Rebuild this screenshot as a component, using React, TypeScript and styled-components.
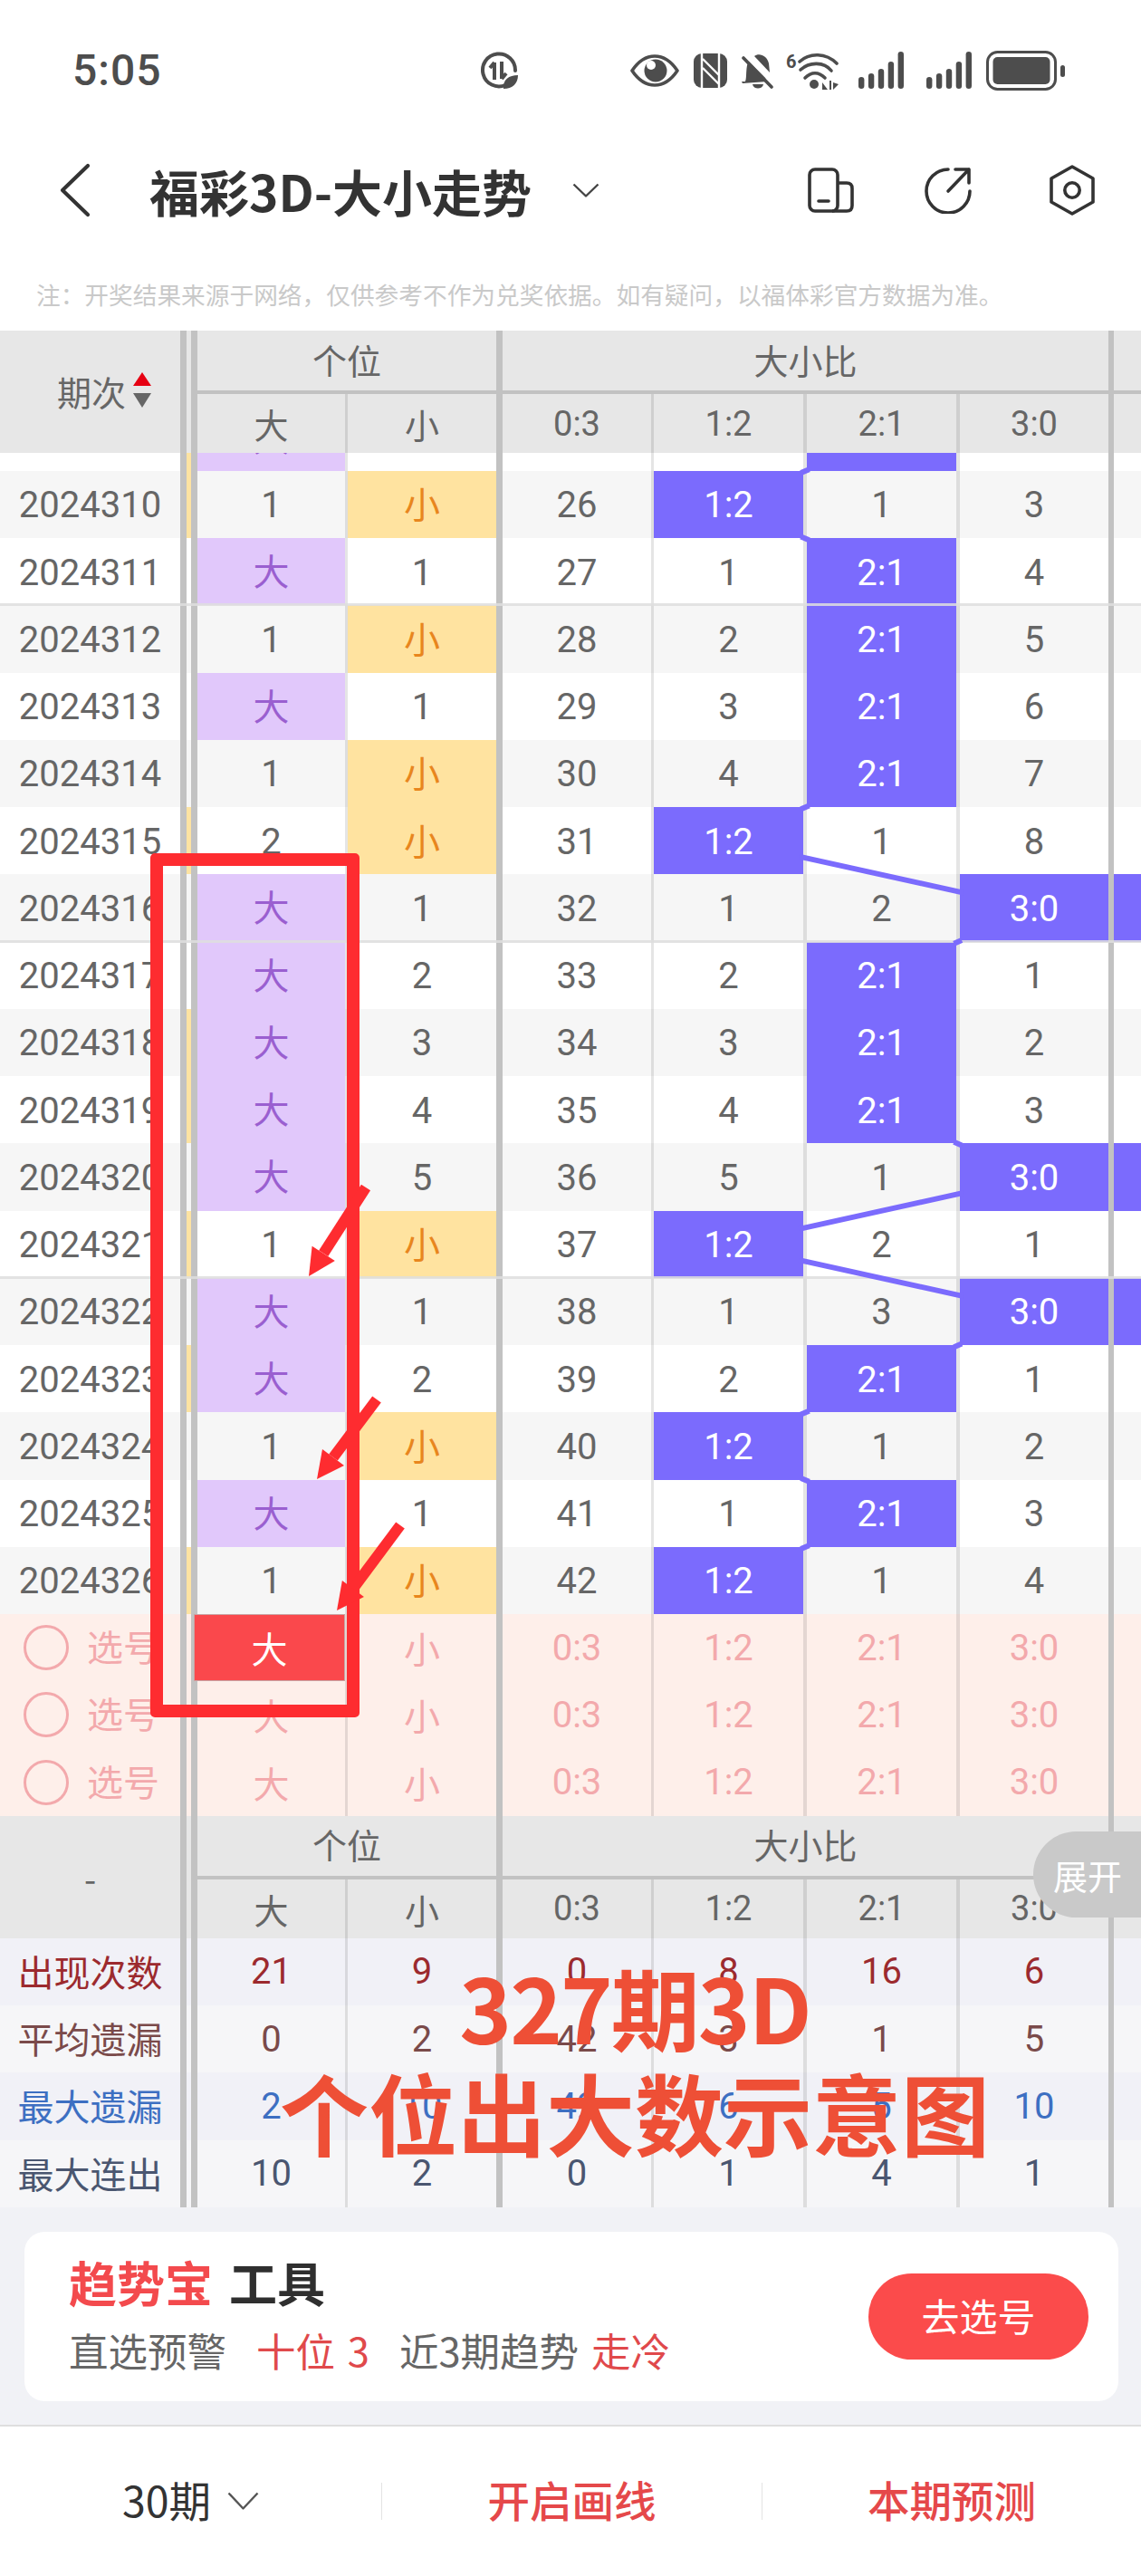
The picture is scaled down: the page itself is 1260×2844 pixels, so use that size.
import React from 'react';
import styled, { createGlobalStyle } from 'styled-components';

const GlobalStyle = createGlobalStyle`
  html, body { margin: 0; padding: 0; background: #fff; }
  * { box-sizing: border-box; }
`;

const FONT = `Roboto, "Noto Sans CJK SC", sans-serif`;
const CJK = `"Noto Sans CJK SC", sans-serif`;
const COLUMNS = '206px 12px 166px 171px 167px 169px 169px 170px 30px';
const EDGES = [3, 7, 3, 4, 4, 6];
const ROW_H = 74.25;

const Page = styled.div`
  position: relative;
  width: 1260px;
  height: 2844px;
  overflow: hidden;
  font-family: ${FONT};
  background: #fff;
  color: #666;
`;

/* ---------- status bar ---------- */
const StatusBar = styled.div`
  display: flex;
  align-items: center;
  height: 155px;
  padding-left: 80px;
  color: #4d4d4d;
`;
const Time = styled.div`
  width: 96px;
  font-size: 48px;
  font-weight: 500;
  letter-spacing: 1px;
  color: #4d4d4d;
`;
const StatusIcons = styled.div`
  display: flex;
  align-items: center;
  margin-left: 352px;
`;
const IconSlot = styled.span<{ $gap?: number }>`
  display: block;
  flex: none;
  margin-left: ${(p) => p.$gap ?? 0}px;
  svg { display: block; }
`;

/* ---------- nav ---------- */
const Nav = styled.div`
  display: flex;
  align-items: center;
  height: 110px;
  padding-left: 65px;
`;
const Title = styled.div`
  margin-left: 65px;
  width: 418px;
  font-family: ${CJK};
  font-size: 55px;
  font-weight: 700;
  white-space: nowrap;
  color: #333;
`;
const Note = styled.div`
  height: 100px;
  padding: 40px 0 0 40px;
  font-family: ${CJK};
  font-size: 26.7px;
  line-height: 40px;
  color: #c9c9c9;
  white-space: nowrap;
`;

/* ---------- table head ---------- */
const HeadGrid = styled.div`
  display: grid;
  grid-template-columns: ${COLUMNS};
  grid-template-rows: 70px 65px;
  background: #e7e7e7;
  font-family: ${CJK};
  font-size: 38px;
  color: #666;
`;
const HeadName = styled.div`
  grid-row: span 2;
  display: flex;
  align-items: center;
  justify-content: center;
  border-right: 7px solid #c2c2c2;
`;
const SortLabel = styled.div`
  display: flex;
  align-items: center;
  gap: 8px;
  padding: 0 0 3px 31px;
  svg { display: block; }
`;
const HeadGutter = styled.div`
  grid-row: span 2;
  border-right: 7px solid #c2c2c2;
`;
const HeadGroup = styled.div<{ $span: number; $edge: number }>`
  grid-column: span ${(p) => p.$span};
  display: flex;
  align-items: center;
  justify-content: center;
  padding-bottom: 4px;
  border-right: ${(p) => p.$edge}px solid #c2c2c2;
  border-bottom: 4px solid #c2c2c2;
`;
const HeadTail = styled.div`
  border-bottom: 4px solid #c2c2c2;
`;
const HeadCol = styled.div<{ $edge: number }>`
  display: flex;
  align-items: center;
  justify-content: center;
  font-family: ${FONT};
  font-size: 38px;
  border-right: ${(p) => p.$edge}px solid ${(p) => (p.$edge >= 6 ? '#c2c2c2' : '#cfcfcf')};
`;

/* ---------- table rows ---------- */
const Scroller = styled.div`
  height: 1282px;
  overflow: hidden;
`;
const ScrollInner = styled.div`
  position: relative;
  margin-top: -54.5px;
`;
const RowGrid = styled.div<{ $bg: string; $rule?: boolean }>`
  position: relative;
  display: grid;
  grid-template-columns: ${COLUMNS};
  height: ${ROW_H}px;
  background: ${(p) => p.$bg};
  ${(p) =>
    p.$rule &&
    `&::after {
      content: '';
      position: absolute;
      left: 0;
      right: 0;
      bottom: -1px;
      height: 3px;
      background: rgba(222, 222, 222, 0.85);
      z-index: 1;
    }`}
`;
const NameCell = styled.div<{ $color?: string }>`
  display: flex;
  align-items: center;
  justify-content: center;
  padding-top: ${(p) => (p.$color ? 0 : 2)}px;
  padding-bottom: ${(p) => (p.$color ? 2 : 0)}px;
  font-size: 40px;
  color: ${(p) => p.$color ?? '#666'};
  border-right: 7px solid #c2c2c2;
  white-space: nowrap;
  overflow: hidden;
`;
const PickName = styled(NameCell)`
  justify-content: flex-start;
  padding: 0 7px 0 26px;
  color: #f3a9ac;
  font-family: ${CJK};
`;
const PickCircle = styled.span`
  flex: none;
  width: 50px;
  height: 50px;
  margin-right: 20px;
  border: 3px solid #f3a9ac;
  border-radius: 50%;
`;
const PickLabel = styled.span`
  margin-top: -4px;
`;
const Gutter = styled.div<{ $strip?: boolean }>`
  border-right: 7px solid #c2c2c2;
  background: ${(p) => (p.$strip ? '#fde3a2' : 'transparent')};
`;
type Tone = 'plain' | 'purple' | 'yellow' | 'blue' | 'pick' | 'picked';
const toneBg: Record<Tone, string> = {
  plain: 'transparent',
  purple: '#e1c8fb',
  yellow: '#ffe3a0',
  blue: '#7b6bfd',
  pick: 'transparent',
  picked: '#fa484c',
};
const toneFg: Record<Tone, string> = {
  plain: '#666',
  purple: '#9a5fd0',
  yellow: '#e8861e',
  blue: '#fff',
  pick: '#f3a9ac',
  picked: '#fff',
};
const toneShift: Record<Tone, string> = {
  plain: 'padding-top: 2px;',
  purple: 'padding-bottom: 4px;',
  yellow: 'padding-bottom: 3px;',
  blue: 'padding-top: 2px;',
  pick: '',
  picked: '',
};
const Cell = styled.div<{ $tone: Tone; $edge: number; $color?: string }>`
  display: flex;
  align-items: center;
  justify-content: center;
  font-size: 40px;
  ${(p) => (p.$color ? '' : toneShift[p.$tone])}
  background: ${(p) => toneBg[p.$tone]};
  background-clip: padding-box;
  color: ${(p) => p.$color ?? toneFg[p.$tone]};
  border-right: ${(p) => p.$edge}px solid ${(p) => (p.$edge >= 6 ? '#c2c2c2' : 'rgba(0, 0, 0, 0.1)')};
  ${(p) => p.$tone === 'picked' && `margin-left: -4px; box-shadow: inset 0 0 0 1px #c9a3a3;`}
`;
const Tail = styled.div<{ $hit?: boolean }>`
  background: ${(p) => (p.$hit ? '#7b6bfd' : 'transparent')};
`;
const TrendLines = styled.svg`
  position: absolute;
  top: 0;
  left: 0;
  z-index: 2;
  pointer-events: none;
`;

/* ---------- tool card ---------- */
const ToolArea = styled.div`
  height: 242px;
  padding: 27px 25px 0 27px;
  background: #f1f2f6;
  border-bottom: 2px solid #dedede;
`;
const ToolCard = styled.div`
  display: flex;
  align-items: center;
  justify-content: space-between;
  height: 187px;
  padding: 0 33px 0 49px;
  border-radius: 22px;
  background: #fff;
`;
const ToolText = styled.div`
  display: flex;
  flex-direction: column;
  gap: 20px;
  padding-bottom: 6px;
  font-family: ${CJK};
`;
const ToolTitle = styled.div`
  display: flex;
  gap: 18px;
  height: 60px;
  align-items: center;
  font-size: 53px;
  font-weight: 700;
  color: #2f2f2f;
`;
const ToolBrand = styled.span`
  color: #f34a4d;
`;
const ToolSub = styled.div`
  display: flex;
  height: 50px;
  align-items: center;
  font-size: 43.5px;
  color: #666;
  white-space: nowrap;
`;
const SubPart = styled.span<{ $gap?: number; $red?: boolean }>`
  margin-left: ${(p) => p.$gap ?? 0}px;
  word-spacing: 4px;
  color: ${(p) => (p.$red ? '#e0494b' : '#666')};
`;
const GoButton = styled.div`
  display: flex;
  align-items: center;
  justify-content: center;
  width: 243px;
  height: 95px;
  padding-bottom: 3px;
  border-radius: 48px;
  background: #fb4b4b;
  font-family: ${CJK};
  font-size: 42px;
  color: #fff;
`;

/* ---------- bottom bar ---------- */
const BottomBar = styled.div`
  display: grid;
  grid-template-columns: 421px 1px 419px 1px 1fr;
  align-items: center;
  height: 165px;
  font-family: ${CJK};
  font-size: 46.5px;
`;
const BottomItem = styled.div<{ $red?: boolean }>`
  display: flex;
  align-items: center;
  justify-content: center;
  gap: 18px;
  padding-bottom: 5px;
  font-weight: ${(p) => (p.$red ? 500 : 400)};
  color: ${(p) => (p.$red ? '#e5484a' : '#333')};
  svg { display: block; margin-top: 5px; }
`;
const BottomDivider = styled.div`
  height: 41px;
  background: #e3e3e3;
`;

/* ---------- overlays ---------- */
const ExpandTab = styled.div`
  position: absolute;
  left: 1141px;
  top: 2022px;
  width: 119px;
  height: 95px;
  display: flex;
  align-items: center;
  padding-left: 22px;
  border-radius: 48px 0 0 48px;
  background: #c9c9c9;
  font-family: ${CJK};
  font-size: 38px;
  color: #fff;
  z-index: 3;
`;
const RedFrame = styled.div`
  position: absolute;
  left: 166px;
  top: 942px;
  width: 231px;
  height: 954px;
  border: 14px solid #fe2c30;
  border-radius: 5px;
  z-index: 4;
`;
const ArrowLayer = styled.svg`
  position: absolute;
  top: 0;
  left: 0;
  z-index: 5;
  pointer-events: none;
`;
const Caption = styled.div`
  position: absolute;
  left: 260px;
  top: 2156px;
  width: 882px;
  text-align: center;
  font-family: ${CJK};
  font-size: 98px;
  font-weight: 700;
  line-height: 116px;
  color: #ee4f36;
  z-index: 5;
`;
const CaptionTop = styled.div`
  letter-spacing: -2px;
`;

/* ---------- data ---------- */
type RowData = [string, string[]];
const ROWS: RowData[] = [
  ['2024309', ['大', '', '', '', '2:1', '']],
  ['2024310', ['1', '小', '26', '1:2', '1', '3']],
  ['2024311', ['大', '1', '27', '1', '2:1', '4']],
  ['2024312', ['1', '小', '28', '2', '2:1', '5']],
  ['2024313', ['大', '1', '29', '3', '2:1', '6']],
  ['2024314', ['1', '小', '30', '4', '2:1', '7']],
  ['2024315', ['2', '小', '31', '1:2', '1', '8']],
  ['2024316', ['大', '1', '32', '1', '2', '3:0']],
  ['2024317', ['大', '2', '33', '2', '2:1', '1']],
  ['2024318', ['大', '3', '34', '3', '2:1', '2']],
  ['2024319', ['大', '4', '35', '4', '2:1', '3']],
  ['2024320', ['大', '5', '36', '5', '1', '3:0']],
  ['2024321', ['1', '小', '37', '1:2', '2', '1']],
  ['2024322', ['大', '1', '38', '1', '3', '3:0']],
  ['2024323', ['大', '2', '39', '2', '2:1', '1']],
  ['2024324', ['1', '小', '40', '1:2', '1', '2']],
  ['2024325', ['大', '1', '41', '1', '2:1', '3']],
  ['2024326', ['1', '小', '42', '1:2', '1', '4']],
];
const STRIPS = new Set(['2024309', '2024310', '2024315', '2024318', '2024319', '2024321', '2024323', '2024326']);
const RULES = new Set(['2024311', '2024316', '2024321']);
const COL_LABELS = ['大', '小', '0:3', '1:2', '2:1', '3:0'];
const STATS: { label: string; color: string; bg: string; values: string[] }[] = [
  { label: '出现次数', color: '#9c2a2e', bg: '#f1f1f7', values: ['21', '9', '0', '8', '16', '6'] },
  { label: '平均遗漏', color: '#7a4a4a', bg: '#f6f6f8', values: ['0', '2', '42', '3', '1', '5'] },
  { label: '最大遗漏', color: '#3d6fc2', bg: '#f1f1f7', values: ['2', '10', '42', '6', '5', '10'] },
  { label: '最大连出', color: '#4a5670', bg: '#f6f6f8', values: ['10', '2', '0', '1', '4', '1'] },
];

const toneOf = (v: string): Tone => (v === '大' ? 'purple' : v === '小' ? 'yellow' : v.includes(':') ? 'blue' : 'plain');

const CENTER_X: Record<string, number> = { '1:2': 804.5, '2:1': 973.5, '3:0': 1142 };
const hits = ROWS.map(([, v], i) => {
  const label = v.slice(2).find((s) => s.includes(':')) as string;
  return { x: CENTER_X[label], y: i * ROW_H + 37 };
});
const segments = hits.slice(1).flatMap((b, i) => {
  const a = hits[i];
  const dx = b.x - a.x;
  const dy = b.y - a.y;
  if (dx === 0) return [];
  const t = Math.min(82 / Math.abs(dx), 36.5 / dy) - 0.012;
  return [{ x1: a.x + dx * t, y1: a.y + dy * t, x2: b.x - dx * t, y2: b.y - dy * t }];
});

/* ---------- drawings ---------- */
const G = '#4d4d4d';
const EcoIcon = () => (
  <svg width="46" height="42" viewBox="0 0 46 42" fill="none">
    <path d="M30 37 A18 18 0 1 1 41 21" stroke={G} strokeWidth="4" strokeLinecap="round" />
    <path d="M18 31 V12 M18 12 L13 18 M26 11 V30 M26 30 L31 24" stroke={G} strokeWidth="4" />
    <path d="M28 41 C27 31 34 26 44 26 C44 35 38 41 28 41 Z" fill={G} />
  </svg>
);
const EyeIcon = () => (
  <svg width="54" height="36" viewBox="0 0 54 36" fill="none">
    <path d="M2 18 C10 6 18 2 27 2 C36 2 44 6 52 18 C44 30 36 34 27 34 C18 34 10 30 2 18 Z" stroke={G} strokeWidth="3.6" strokeLinejoin="round" />
    <circle cx="28" cy="18" r="12.5" fill={G} />
    <circle cx="23" cy="12" r="5" fill="#fff" />
  </svg>
);
const NfcIcon = () => (
  <svg width="37" height="38" viewBox="0 0 37 38">
    <rect width="37" height="38" rx="9" fill={G} />
    <path d="M9 0 V38 M28 0 V38 M10 6 L28 24 M10 16 L28 34" stroke="#fff" strokeWidth="2.4" fill="none" />
  </svg>
);
const BellIcon = () => (
  <svg width="36" height="40" viewBox="0 0 36 40">
    <path d="M0 32 H4 C6 28 4 14 8 10 L26 28 L28 32 H28 L1 34 Z M14 4 C19 0 28 3 30 12 L31 22 Z" fill={G} />
    <path d="M12 35 H24 C23 41 13 41 12 35 Z" fill={G} />
    <path d="M2 6 L33 38" stroke={G} strokeWidth="3.6" strokeLinecap="round" />
  </svg>
);
const WifiIcon = () => (
  <svg width="58" height="42" viewBox="0 0 58 42" fill="none">
    <text x="0" y="18" fontFamily="Roboto, sans-serif" fontWeight="700" fontSize="20" fill={G}>6</text>
    <path d="M15 11 C26 1 44 1 56 13" stroke={G} strokeWidth="3.6" strokeLinecap="round" />
    <path d="M16 20 C26 11 42 11 50 21" stroke={G} strokeWidth="3.6" strokeLinecap="round" />
    <path d="M21 29 C28 22 36 22 43 29" stroke={G} strokeWidth="3.6" strokeLinecap="round" />
    <circle cx="31" cy="36" r="5" fill={G} />
    <path d="M40 42 V34 L46 42 Z M48 42 V32 H50 V42 Z M52 34 L58 36 L52 42 Z" fill={G} />
  </svg>
);
const SignalIcon = () => (
  <svg width="50" height="41" viewBox="0 0 50 41">
    {[13, 17, 22, 30, 41].map((h, i) => (
      <rect key={i} x={i * 10.9} y={41 - h} width="6.4" height={h} rx="3.2" fill={G} />
    ))}
  </svg>
);
const BatteryIcon = () => (
  <svg width="87" height="44" viewBox="0 0 87 44">
    <rect x="1.5" y="1.5" width="75" height="41" rx="11" fill="none" stroke={G} strokeWidth="3" />
    <rect x="7.5" y="7" width="63" height="30" rx="5" fill={G} />
    <rect x="82" y="16" width="5" height="13" rx="2.5" fill={G} />
  </svg>
);
const BackIcon = () => (
  <svg width="35" height="60" viewBox="0 0 35 60" fill="none">
    <path d="M32 3 L4 30 L32 57" stroke="#333" strokeWidth="4.2" strokeLinecap="round" strokeLinejoin="round" />
  </svg>
);
const CaretIcon = ({ w, h, c }: { w: number; h: number; c: string }) => (
  <svg width={w} height={h} viewBox={`0 0 ${w} ${h}`} fill="none">
    <path d={`M1.5 1.5 L${w / 2} ${h - 1.5} L${w - 1.5} 1.5`} stroke={c} strokeWidth="2.4" strokeLinejoin="round" />
  </svg>
);
const DeviceIcon = () => (
  <svg width="51" height="50" viewBox="0 0 51 50" fill="none" stroke="#333" strokeWidth="3.6" strokeLinejoin="round">
    <rect x="2" y="2" width="31" height="46" rx="6" />
    <path d="M33 17 H43 C47 17 49 19 49 23 V42 C49 46 47 48 43 48 H27" />
    <path d="M12 37 H23" strokeLinecap="round" />
  </svg>
);
const ShareIcon = () => (
  <svg width="52" height="52" viewBox="0 0 52 52" fill="none" stroke="#333" strokeWidth="3.6" strokeLinecap="round" strokeLinejoin="round">
    <path d="M26 3 A24 24 0 1 0 50 27" />
    <path d="M26 27 L49 3 M34 3 H49 V18" />
  </svg>
);
const HexIcon = () => (
  <svg width="50" height="56" viewBox="0 0 50 56" fill="none" stroke="#333" strokeWidth="3.6" strokeLinejoin="round">
    <path d="M25 2 L48 15 V41 L25 54 L2 41 V15 Z" />
    <circle cx="25" cy="28" r="8.2" />
  </svg>
);
const SortIcon = () => (
  <svg width="20" height="40" viewBox="0 0 20 40">
    <path d="M10 0 L20 15 H0 Z" fill="#e60012" />
    <path d="M10 39 L20 23 H0 Z" fill="#666" />
  </svg>
);

const ARROWS = [
  { sx: 404, sy: 1311, tx: 341, ty: 1409 },
  { sx: 416, sy: 1545, tx: 350, ty: 1633 },
  { sx: 442, sy: 1684, tx: 372, ty: 1778 },
];
const Arrow = ({ sx, sy, tx, ty }: { sx: number; sy: number; tx: number; ty: number }) => {
  const len = Math.hypot(tx - sx, ty - sy);
  const ux = (tx - sx) / len;
  const uy = (ty - sy) / len;
  const bx = tx - ux * 30;
  const by = ty - uy * 30;
  const nx = -uy * 15;
  const ny = ux * 15;
  return (
    <g fill="#fe2c30" stroke="none">
      <line x1={sx} y1={sy} x2={bx} y2={by} stroke="#fe2c30" strokeWidth="12" />
      <polygon points={`${tx},${ty} ${bx + nx},${by + ny} ${bx - nx},${by - ny}`} />
    </g>
  );
};

const TableHead = ({ name }: { name: React.ReactNode }) => (
  <HeadGrid>
    <HeadName>{name}</HeadName>
    <HeadGutter />
    <HeadGroup $span={2} $edge={7}>个位</HeadGroup>
    <HeadGroup $span={4} $edge={6}>大小比</HeadGroup>
    <HeadTail />
    {COL_LABELS.map((c, i) => (
      <HeadCol key={c} $edge={EDGES[i]}>{c}</HeadCol>
    ))}
  </HeadGrid>
);

export default function App() {
  return (
    <Page>
      <GlobalStyle />
      <StatusBar>
        <Time>5:05</Time>
        <StatusIcons>
          <IconSlot><EcoIcon /></IconSlot>
          <IconSlot $gap={122}><EyeIcon /></IconSlot>
          <IconSlot $gap={16}><NfcIcon /></IconSlot>
          <IconSlot $gap={16}><BellIcon /></IconSlot>
          <IconSlot $gap={13}><WifiIcon /></IconSlot>
          <IconSlot $gap={22}><SignalIcon /></IconSlot>
          <IconSlot $gap={25}><SignalIcon /></IconSlot>
          <IconSlot $gap={16}><BatteryIcon /></IconSlot>
        </StatusIcons>
      </StatusBar>
      <Nav>
        <IconSlot><BackIcon /></IconSlot>
        <Title>福彩3D-大小走势</Title>
        <IconSlot $gap={49}><CaretIcon w={30} h={16} c="#444" /></IconSlot>
        <IconSlot $gap={230}><DeviceIcon /></IconSlot>
        <IconSlot $gap={78}><ShareIcon /></IconSlot>
        <IconSlot $gap={86}><HexIcon /></IconSlot>
      </Nav>
      <Note>注：开奖结果来源于网络，仅供参考不作为兑奖依据。如有疑问，以福体彩官方数据为准。</Note>

      <TableHead
        name={
          <SortLabel>
            期次
            <SortIcon />
          </SortLabel>
        }
      />

      <Scroller>
        <ScrollInner>
          {ROWS.map(([no, values], i) => (
            <RowGrid key={no} $bg={i % 2 ? '#f6f6f6' : '#ffffff'} $rule={RULES.has(no)}>
              <NameCell>{i > 0 && no}</NameCell>
              <Gutter $strip={STRIPS.has(no)} />
              {values.map((v, c) => (
                <Cell key={c} $tone={toneOf(v)} $edge={EDGES[c]}>{v}</Cell>
              ))}
              <Tail $hit={values[5] === '3:0'} />
            </RowGrid>
          ))}
          <TrendLines width="1260" height={ROWS.length * ROW_H}>
            {segments.map((s, i) => (
              <line key={i} {...s} stroke="#7b6bfd" strokeWidth="6" />
            ))}
          </TrendLines>
        </ScrollInner>
      </Scroller>

      {[0, 1, 2].map((r) => (
        <RowGrid key={r} $bg="#feefea">
          <PickName>
            <PickCircle />
            <PickLabel>选号</PickLabel>
          </PickName>
          <Gutter />
          {COL_LABELS.map((c, i) => (
            <Cell key={c} $tone={r === 0 && i === 0 ? 'picked' : 'pick'} $edge={EDGES[i]}>{c}</Cell>
          ))}
          <Tail />
        </RowGrid>
      ))}

      <TableHead name="-" />

      {STATS.map((s) => (
        <RowGrid key={s.label} $bg={s.bg}>
          <NameCell $color={s.color}>{s.label}</NameCell>
          <Gutter />
          {s.values.map((v, i) => (
            <Cell key={i} $tone="plain" $edge={EDGES[i]} $color={s.color}>{v}</Cell>
          ))}
          <Tail />
        </RowGrid>
      ))}

      <ToolArea>
        <ToolCard>
          <ToolText>
            <ToolTitle>
              <ToolBrand>趋势宝</ToolBrand>
              <span>工具</span>
            </ToolTitle>
            <ToolSub>
              <SubPart>直选预警</SubPart>
              <SubPart $gap={33} $red>十位 3</SubPart>
              <SubPart $gap={33}>近3期趋势</SubPart>
              <SubPart $gap={14} $red>走冷</SubPart>
            </ToolSub>
          </ToolText>
          <GoButton>去选号</GoButton>
        </ToolCard>
      </ToolArea>

      <BottomBar>
        <BottomItem>
          30期
          <CaretIcon w={35} h={20} c="#555" />
        </BottomItem>
        <BottomDivider />
        <BottomItem $red>开启画线</BottomItem>
        <BottomDivider />
        <BottomItem $red>本期预测</BottomItem>
      </BottomBar>

      <ExpandTab>展开</ExpandTab>
      <RedFrame />
      <ArrowLayer width="1260" height="2844">
        {ARROWS.map((a, i) => (
          <Arrow key={i} {...a} />
        ))}
      </ArrowLayer>
      <Caption>
        <CaptionTop>327期3D</CaptionTop>
        个位出大数示意图
      </Caption>
    </Page>
  );
}
